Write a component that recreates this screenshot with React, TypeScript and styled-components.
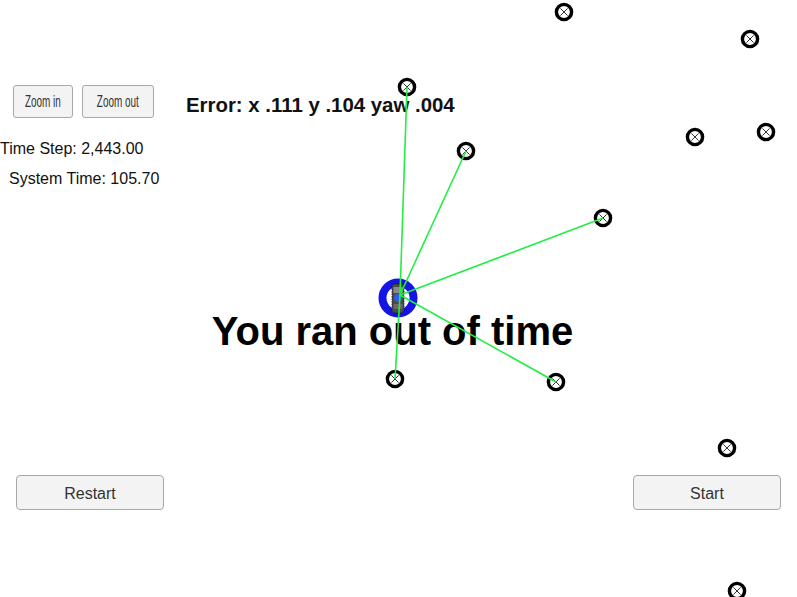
import React from "react";
import styled, { createGlobalStyle } from "styled-components";

const GlobalStyle = createGlobalStyle`
  html, body { margin: 0; padding: 0; background: #ffffff; }
  body { font-family: "Liberation Sans", Arial, sans-serif; }
`;

const Stage = styled.div`
  position: relative;
  width: 797px;
  height: 597px;
  overflow: hidden;
  background: #ffffff;
`;

const Hud = styled.div`
  display: flex;
  flex-direction: column;
  height: 100%;
  padding-top: 85px;
  box-sizing: border-box;
`;

const TopRow = styled.div`
  display: flex;
  align-items: flex-start;
`;

const LeftPanel = styled.div`
  width: 169px;
  display: flex;
  flex-direction: column;
`;

const ZoomRow = styled.div`
  display: flex;
  gap: 9px;
  padding-left: 13px;
`;

const ZoomButton = styled.button<{ $w: number }>`
  width: ${(p) => p.$w}px;
  height: 33px;
  padding: 0;
  box-sizing: border-box;
  background: #f3f3f3;
  border: 1px solid #a8a8a8;
  border-radius: 3px;
  color: #333333;
  font-family: "Liberation Sans", Arial, sans-serif;
  font-size: 16px;
  display: flex;
  align-items: center;
  justify-content: center;
  overflow: hidden;
`;

const Narrow = styled.span`
  display: inline-block;
  transform: scaleX(0.62);
  white-space: nowrap;
`;

const Stats = styled.div`
  margin-top: 16px;
  display: flex;
  flex-direction: column;
`;

const StatLine = styled.div<{ $indent: number }>`
  padding-left: ${(p) => p.$indent}px;
  font-size: 16px;
  line-height: 30px;
  color: #111111;
  white-space: nowrap;
`;

const ErrorLabel = styled.div`
  margin-top: 8px;
  margin-left: 17px;
  font-size: 20.4px;
  line-height: 24px;
  font-weight: bold;
  color: #111111;
  white-space: nowrap;
`;

const Message = styled.div`
  margin-top: 113px;
  padding-right: 12px;
  text-align: center;
  font-size: 40px;
  line-height: 48px;
  font-weight: bold;
  color: #000000;
  white-space: nowrap;
`;

const BottomRow = styled.div`
  margin-top: auto;
  padding: 0 16px 87px 16px;
  display: flex;
  justify-content: space-between;
`;

const WideButton = styled.button`
  width: 148px;
  height: 35px;
  box-sizing: border-box;
  background: #f3f3f3;
  border: 1px solid #a8a8a8;
  border-radius: 4px;
  color: #333333;
  font-family: "Liberation Sans", Arial, sans-serif;
  font-size: 16px;
  padding: 2px 0 0 0;
`;

const Scene = styled.svg`
  position: absolute;
  left: 0;
  top: 0;
  pointer-events: none;
`;

const landmarks: [number, number][] = [
  [564, 12],
  [750, 39],
  [407, 87],
  [466, 151],
  [695, 137],
  [766, 132],
  [603, 218],
  [395, 379],
  [556, 382],
  [727, 448],
  [737, 591],
];

const observed: [number, number][] = [
  [407, 87],
  [466, 151],
  [603, 218],
  [556, 382],
  [395, 379],
];

const origin: [number, number] = [400, 295];

function Landmark({ x, y }: { x: number; y: number }) {
  return (
    <g>
      <circle cx={x} cy={y} r={7.6} fill="#ffffff" stroke="#000000" strokeWidth={3.4} />
      <line x1={x - 3.6} y1={y - 3.6} x2={x + 3.6} y2={y + 3.6} stroke="#333" strokeWidth={1} />
      <line x1={x - 3.6} y1={y + 3.6} x2={x + 3.6} y2={y - 3.6} stroke="#333" strokeWidth={1} />
    </g>
  );
}

function Car() {
  return (
    <g>
      <circle cx={398} cy={298} r={15.5} fill="#ffffff" stroke="#1414e6" strokeWidth={8} />
      <rect x={392} y={284} width={12} height={29} rx={2.5} fill="#4a4a4a" stroke="#111" strokeWidth={0.8} strokeDasharray="1.5 1" />
      <rect x={393.5} y={287} width={9} height={6} fill="#8a8a8a" />
      <circle cx={398} cy={298} r={4} fill="#2f5fe0" />
      <rect x={393.5} y={304} width={9} height={5} fill="#6a6a6a" />
    </g>
  );
}

export default function App() {
  return (
    <>
      <GlobalStyle />
      <Stage>
        <Hud>
          <TopRow>
            <LeftPanel>
              <ZoomRow>
                <ZoomButton $w={60}>
                  <Narrow>Zoom in</Narrow>
                </ZoomButton>
                <ZoomButton $w={72}>
                  <Narrow>Zoom out</Narrow>
                </ZoomButton>
              </ZoomRow>
              <Stats>
                <StatLine $indent={0}>Time Step: 2,443.00</StatLine>
                <StatLine $indent={9}>System Time: 105.70</StatLine>
              </Stats>
            </LeftPanel>
            <ErrorLabel>Error: x .111 y .104 yaw .004</ErrorLabel>
          </TopRow>
          <Message>You ran out of time</Message>
          <BottomRow>
            <WideButton>Restart</WideButton>
            <WideButton>Start</WideButton>
          </BottomRow>
        </Hud>
        <Scene width={797} height={597} viewBox="0 0 797 597">
          {landmarks.map(([x, y], i) => (
            <Landmark key={i} x={x} y={y} />
          ))}
          <Car />
          {observed.map(([x, y], i) => (
            <line
              key={i}
              x1={origin[0]}
              y1={origin[1]}
              x2={x}
              y2={y}
              stroke="#22ee44"
              strokeWidth={1.6}
            />
          ))}
        </Scene>
      </Stage>
    </>
  );
}
